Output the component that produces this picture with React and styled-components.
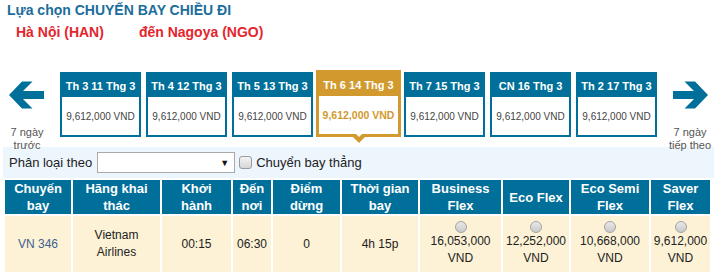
import React from "react";
import styled, { createGlobalStyle } from "styled-components";

const GlobalStyle = createGlobalStyle`
  body {
    margin: 0;
    background: #fff;
    font-family: "Liberation Sans", Arial, sans-serif;
  }
`;

const Page = styled.div`
  width: 714px;
  height: 273px;
  overflow: hidden;
`;

const Title = styled.h2`
  margin: 0;
  padding: 1px 0 0 7px;
  font-size: 14px;
  line-height: 18px;
  font-weight: bold;
  color: #1b6d9c;
`;

const Route = styled.div`
  display: flex;
  gap: 35px;
  margin-top: 4px;
  padding-left: 16px;
  font-size: 14px;
  line-height: 18px;
  font-weight: bold;
  color: #e4252d;
`;

const DateRow = styled.div`
  display: flex;
  align-items: flex-start;
  height: 77px;
  margin-top: 29px;
  position: relative;
  z-index: 1;
`;

const Nav = styled.div`
  width: ${(p) => p.$w}px;
  margin: ${(p) => p.$m};
  text-align: center;
  color: #555;
  font-size: 11px;
  line-height: 13px;
  cursor: pointer;

  svg {
    display: block;
    margin: 10px auto 0;
  }
`;

const NavLabel = styled.div`
  margin-top: 16px;
`;

const Tabs = styled.div`
  display: flex;
  gap: 5px;
`;

const Tab = styled.div`
  position: relative;
  box-sizing: border-box;
  display: flex;
  flex-direction: column;
  width: ${(p) => (p.$active ? 85 : 81)}px;
  height: ${(p) => (p.$active ? 67 : 65)}px;
  margin: ${(p) => (p.$active ? "0 -2px" : "2px 0 0")};
  border: ${(p) => (p.$active ? "3px solid #d29a2e" : "2px solid #006f9a")};
  background: #fff;
  cursor: pointer;

  ${(p) =>
    p.$active &&
    `
    &::after {
      content: "";
      position: absolute;
      top: 100%;
      left: 50%;
      transform: translateX(-50%);
      border-left: 9px solid transparent;
      border-right: 9px solid transparent;
      border-top: 9px solid #d29a2e;
    }
    &::before {
      content: "";
      position: absolute;
      top: calc(100% - 3px);
      left: 50%;
      transform: translateX(-50%);
      border-left: 6px solid transparent;
      border-right: 6px solid transparent;
      border-top: 6px solid #fff;
      z-index: 1;
    }
  `}
`;

const TabHead = styled.div`
  height: 23px;
  display: flex;
  align-items: center;
  justify-content: center;
  background: ${(p) => (p.$active ? "#d29a2e" : "#006f9a")};
  color: #fff;
  font-size: 11px;
  font-weight: bold;
  white-space: nowrap;
`;

const TabPrice = styled.div`
  flex: 1;
  display: flex;
  align-items: center;
  justify-content: center;
  font-size: ${(p) => (p.$active ? "10.5px" : "10px")};
  color: ${(p) => (p.$active ? "#d29a2e" : "#444")};
  font-weight: ${(p) => (p.$active ? "bold" : "normal")};
  white-space: nowrap;
`;

const FilterBar = styled.div`
  display: flex;
  align-items: center;
  height: 31px;
  margin-left: 3px;
  padding-left: 6px;
  background: #edf5fd;
  font-size: 13px;
  color: #222;
`;

const FakeSelect = styled.div`
  box-sizing: border-box;
  width: 138px;
  height: 21px;
  margin-left: 5px;
  border: 1px solid #a9a9a9;
  background: #fff;
  display: flex;
  align-items: center;
  justify-content: flex-end;
  padding-right: 5px;
  font-size: 9px;
  color: #111;
`;

const Check = styled.span`
  box-sizing: border-box;
  width: 13px;
  height: 13px;
  margin: 0 4px 0 4px;
  border: 1px solid #9a9a9a;
  border-radius: 3px;
  background: linear-gradient(#f4f4f4, #d6d6d6);
`;

const Table = styled.table`
  table-layout: fixed;
  width: 709px;
  margin-left: 3px;
  border-collapse: separate;
  border-spacing: 2px;
  background: #fff;
`;

const Col = styled.col`
  width: ${(p) => p.$w}px;
`;

const Th = styled.th`
  height: 34px;
  padding: 0;
  background: #006f9a;
  color: #fff;
  font-size: 13px;
  line-height: 17px;
  font-weight: bold;
  text-align: center;
`;

const Td = styled.td`
  height: 56px;
  padding: 0;
  background: #fdf2d6;
  color: ${(p) => (p.$link ? "#3b628f" : "#222")};
  font-size: 12px;
  line-height: 17px;
  text-align: center;
  vertical-align: middle;
`;

const Radio = styled.span`
  display: block;
  box-sizing: border-box;
  width: 12px;
  height: 12px;
  margin: 0 auto;
  border: 1px solid #a2a2a2;
  border-radius: 50%;
  background: linear-gradient(#e9e9e9, #c9c9c9);
`;

const Arrow = ({ dir }) => (
  <svg width="36" height="30" viewBox="0 0 36 30">
    <polygon
      fill="#006f9a"
      transform={dir === "right" ? "translate(36 0) scale(-1 1)" : undefined}
      points="0,15 13,1.5 23.5,1.5 14,11 35,11 35,19 14,19 23.5,28.5 13,28.5"
    />
  </svg>
);

const days = [
  "Th 3 11 Thg 3",
  "Th 4 12 Thg 3",
  "Th 5 13 Thg 3",
  "Th 6 14 Thg 3",
  "Th 7 15 Thg 3",
  "CN 16 Thg 3",
  "Th 2 17 Thg 3",
];

const cols = [66, 87, 69, 38, 67, 76, 81, 66, 78, 59];

const heads = [
  ["Chuyến", "bay"],
  ["Hãng khai", "thác"],
  ["Khởi", "hành"],
  ["Đến", "nơi"],
  ["Điểm", "dừng"],
  ["Thời gian", "bay"],
  ["Business", "Flex"],
  ["Eco Flex"],
  ["Eco Semi", "Flex"],
  ["Saver", "Flex"],
];

const fares = ["16,053,000", "12,252,000", "10,668,000", "9,612,000"];

const Lines = ({ lines }) =>
  lines.map((l, i) => (
    <React.Fragment key={i}>
      {i > 0 && <br />}
      {l}
    </React.Fragment>
  ));

export default function App() {
  return (
    <Page>
      <GlobalStyle />
      <Title>Lựa chọn CHUYẾN BAY CHIỀU ĐI</Title>
      <Route>
        <span>Hà Nội (HAN)</span>
        <span>đến Nagoya (NGO)</span>
      </Route>

      <DateRow>
        <Nav $w={54} $m="0 6px 0 0">
          <Arrow dir="left" />
          <NavLabel>
            7 ngày
            <br />
            trước
          </NavLabel>
        </Nav>
        <Tabs>
          {days.map((d, i) => (
            <Tab key={d} $active={i === 3}>
              <TabHead $active={i === 3}>{d}</TabHead>
              <TabPrice $active={i === 3}>9,612,000 VND</TabPrice>
            </Tab>
          ))}
        </Tabs>
        <Nav $w={48} $m="0 0 0 9px">
          <Arrow dir="right" />
          <NavLabel>
            7 ngày
            <br />
            tiếp theo
          </NavLabel>
        </Nav>
      </DateRow>

      <FilterBar>
        Phân loại theo
        <FakeSelect>▼</FakeSelect>
        <Check />
        Chuyển bay thẳng
      </FilterBar>

      <Table>
        <colgroup>
          {cols.map((w, i) => (
            <Col key={i} $w={w} />
          ))}
        </colgroup>
        <thead>
          <tr>
            {heads.map((h, i) => (
              <Th key={i}>
                <Lines lines={h} />
              </Th>
            ))}
          </tr>
        </thead>
        <tbody>
          <tr>
            <Td $link>VN 346</Td>
            <Td>
              Vietnam
              <br />
              Airlines
            </Td>
            <Td>00:15</Td>
            <Td>06:30</Td>
            <Td>0</Td>
            <Td>4h 15p</Td>
            {fares.map((f) => (
              <Td key={f}>
                <Radio />
                {f}
                <br />
                VND
              </Td>
            ))}
          </tr>
        </tbody>
      </Table>
    </Page>
  );
}
